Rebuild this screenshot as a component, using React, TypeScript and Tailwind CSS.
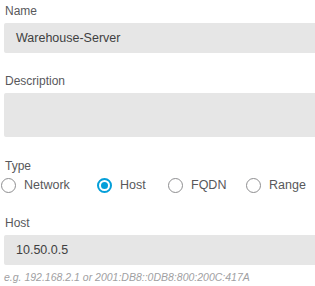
const types = ["Network", "Host", "FQDN", "Range"];

function Radio({ label, checked }: { label: string; checked?: boolean }) {
  return (
    <label className="flex items-center gap-[8px]">
      {checked ? (
        <span className="flex h-[15px] w-[15px] items-center justify-center rounded-full border-[2px] border-[#049fd9]">
          <span className="h-[7px] w-[7px] rounded-full bg-[#049fd9]" />
        </span>
      ) : (
        <span className="h-[15px] w-[15px] rounded-full border border-[#8e8e90]" />
      )}
      <span className="text-[12.5px] text-[#58585b]">{label}</span>
    </label>
  );
}

export default function App() {
  return (
    <div
      className="h-[286px] w-[315px] overflow-hidden bg-white pt-[3px] text-[#58585b]"
      style={{ fontFamily: '"Liberation Sans", Arial, sans-serif' }}
    >
      <div className="pl-[5px] text-[12px] leading-[16px]">Name</div>
      <div className="ml-[4px] mt-[4px] flex h-[30px] w-[320px] items-center rounded-[2px] bg-[#e6e6e6] pl-[12px] text-[12.5px] text-[#3f3f41]">
        Warehouse-Server
      </div>

      <div className="mt-[20px] pl-[5px] text-[12px] leading-[16px]">Description</div>
      <div className="ml-[4px] mt-[4px] h-[44px] w-[320px] rounded-[2px] bg-[#e6e6e6]" />

      <div className="mt-[21px] pl-[5px] text-[12px] leading-[16px]">Type</div>
      <div className="mt-[1px] grid h-[20px] grid-cols-[96px_71px_78px_1fr] items-center pl-[1px]">
        {types.map((t) => (
          <Radio key={t} label={t} checked={t === "Host"} />
        ))}
      </div>

      <div className="mt-[20px] pl-[5px] text-[12px] leading-[16px]">Host</div>
      <div className="ml-[4px] mt-[4px] flex h-[30px] w-[320px] items-center rounded-[2px] bg-[#e6e6e6] pl-[12px] text-[12.5px] text-[#3f3f41]">
        10.50.0.5
      </div>
      <div className="mt-[5px] pl-[4px] text-[10.5px] italic leading-[14px] text-[#a0a0a2]">
        e.g. 192.168.2.1 or 2001:DB8::0DB8:800:200C:417A
      </div>
    </div>
  );
}
